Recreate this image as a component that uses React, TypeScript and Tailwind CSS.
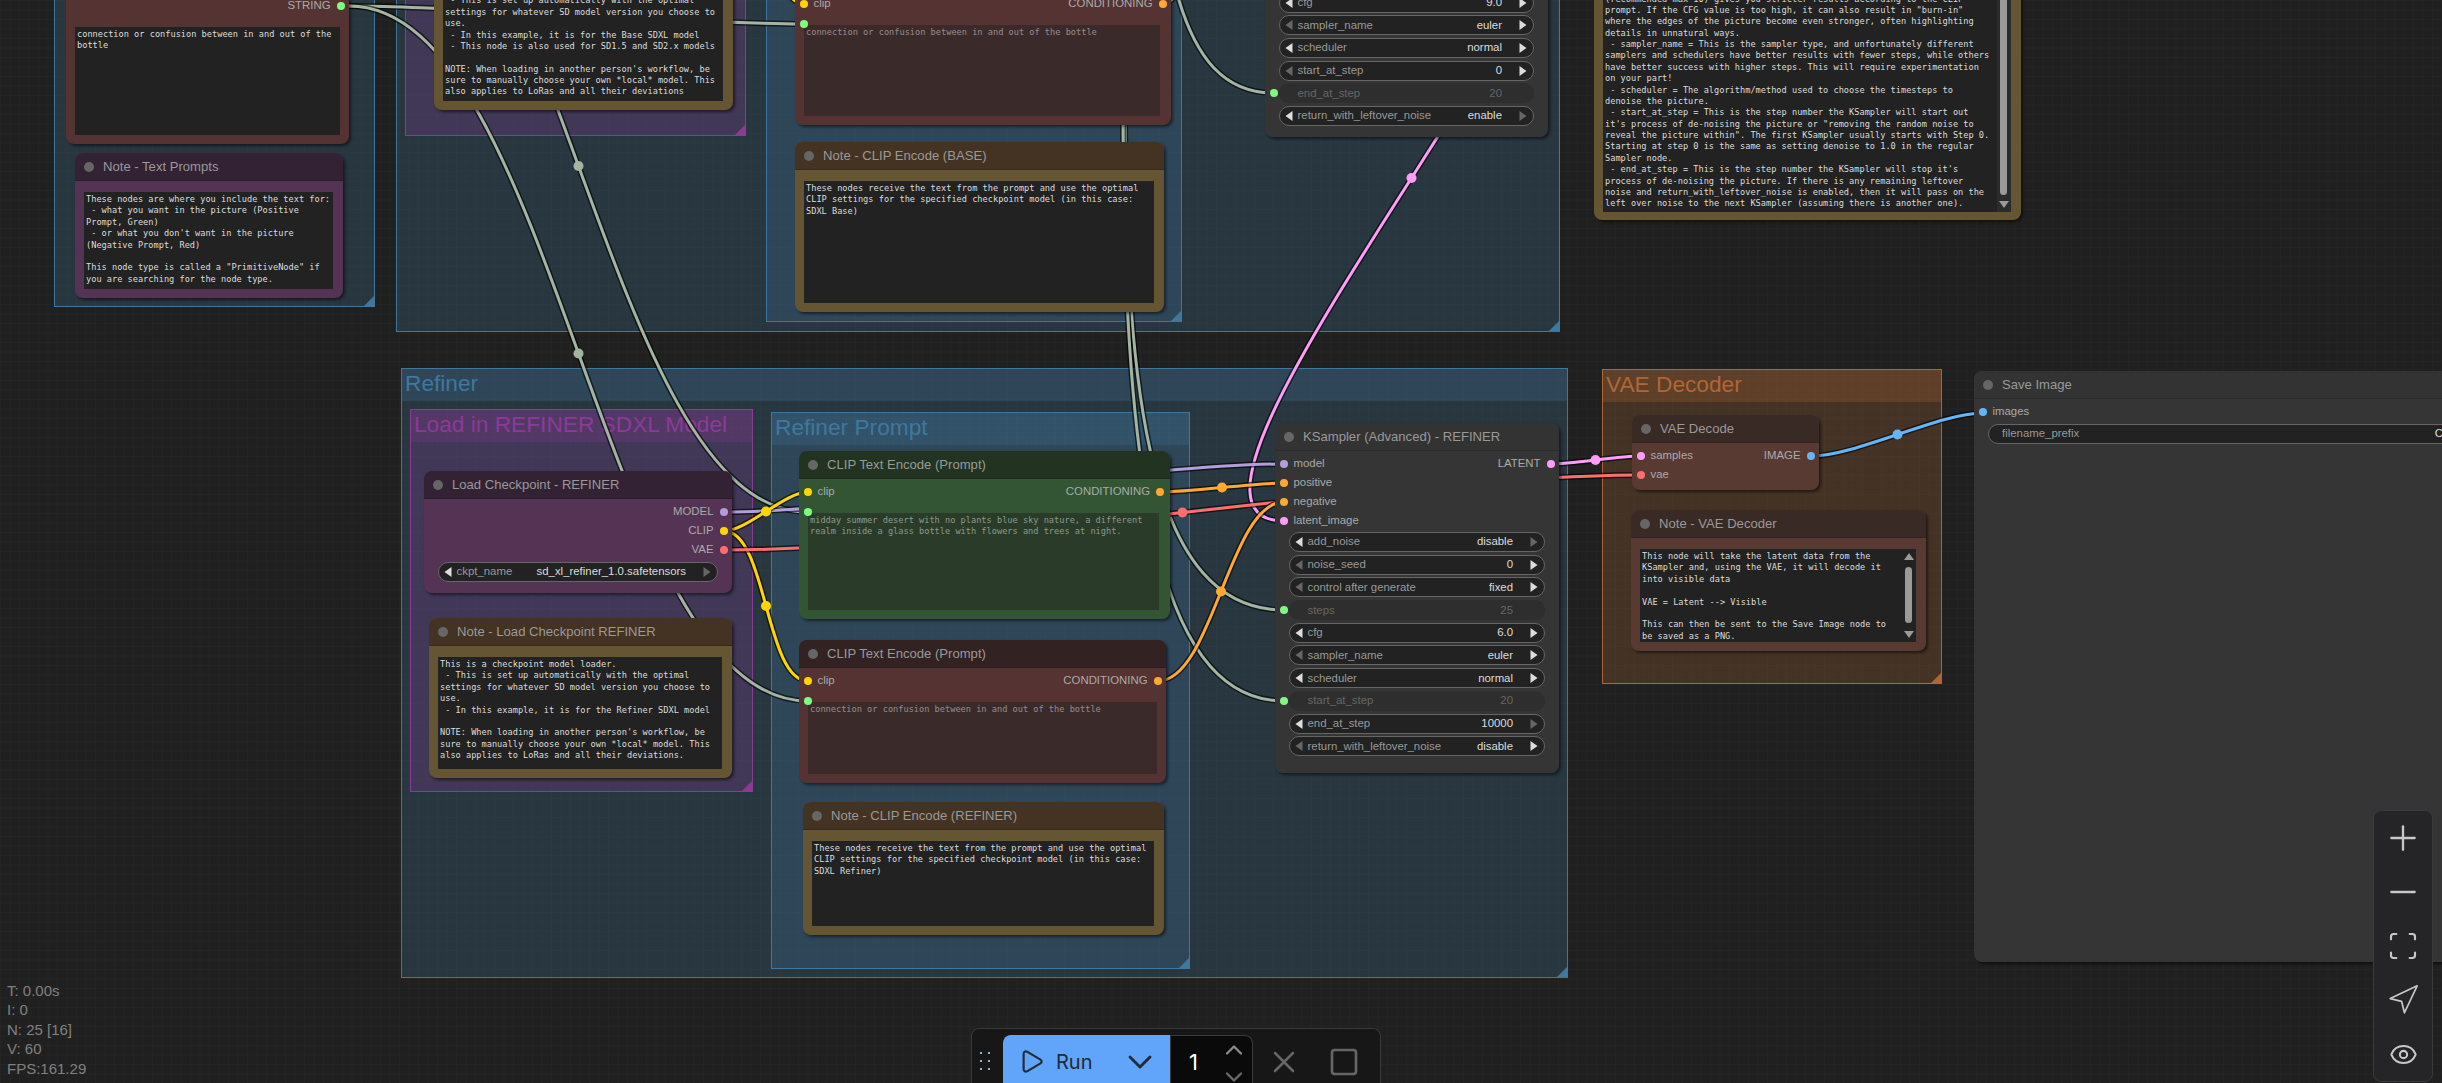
import type { ReactNode } from "react";
import { ChevronDown, ChevronUp, Eye, Minus, Navigation, Play, Plus, Scan, Square, X } from "lucide-react";

type Pt = [number, number];
type Link = { from?: Pt; to?: Pt; d?: string; color: string; mid?: boolean };

const STRING = "#a3b4a3";
const YELLOW = "#ffd500";
const ORANGE = "#ffa931";
const PURPLE = "#b39ddb";
const RED = "#ff6e6e";
const PINK = "#ff9cf9";
const BLUE = "#64b5f6";

const links: Link[] = [
  { from: [349, 6], to: [804, 24], color: STRING },
  { from: [349, 6], to: [808, 701], color: STRING },
  { from: [349, -180], to: [808, 512], color: STRING },
  { d: "M1176 -10 C1195 60 1225 93 1274 93", color: STRING },
  { d: "M1125 100 C1125 400 1150 610 1284 610", color: STRING },
  { d: "M1123 100 C1123 450 1150 701 1284 701", color: STRING },
  { d: "M780 -12 C790 -4 796 4 804 4", color: YELLOW },
  { d: "M1162 4 C1170 3 1175 -2 1180 -10", color: ORANGE },
  { from: [1539, -165], to: [1284, 521], color: PINK },
  { from: [724, 512], to: [1284, 464], color: PURPLE },
  { from: [724, 531], to: [808, 492], color: YELLOW },
  { from: [724, 531], to: [808, 681], color: YELLOW },
  { from: [724, 550], to: [1641, 475], color: RED },
  { from: [1160, 492], to: [1284, 483], color: ORANGE },
  { from: [1158, 681], to: [1284, 502], color: ORANGE },
  { from: [1550, 464], to: [1641, 456], color: PINK },
  { from: [1812, 456], to: [1983, 413], color: BLUE },
];

// litegraph draws its links as a spline with handles a quarter of the distance long
function spline(a: Pt, b: Pt) {
  const k = Math.hypot(b[0] - a[0], b[1] - a[1]) * 0.25;
  return `M${a[0]} ${a[1]} C${a[0] + k} ${a[1]} ${b[0] - k} ${b[1]} ${b[0]} ${b[1]}`;
}

function Wires() {
  return (
    <svg className="absolute left-0 top-0" width={2442} height={1083} fill="none">
      {links.map((l, i) => {
        const d = l.d ?? spline(l.from as Pt, l.to as Pt);
        return (
          <g key={i}>
            <path d={d} stroke="#000" strokeOpacity={0.6} strokeWidth={6} />
            <path d={d} stroke={l.color} strokeWidth={3} />
            {l.from && l.to && (
              <circle cx={(l.from[0] + l.to[0]) / 2} cy={(l.from[1] + l.to[1]) / 2} r={5} fill={l.color} />
            )}
          </g>
        );
      })}
    </svg>
  );
}

const groupTones = {
  blue: { fill: "bg-[#3f789e]/25", edge: "border-[#3f789e]", text: "text-[#3f789e]", corner: "bg-[#3f789e]" },
  purple: { fill: "bg-[#8c3a98]/25", edge: "border-[#8c3a98]", text: "text-[#8c3a98]", corner: "bg-[#8c3a98]" },
  orange: { fill: "bg-[#b06634]/25", edge: "border-[#b06634]", text: "text-[#b06634]", corner: "bg-[#b06634]" },
};

function Group({ className, tone, title }: { className: string; tone: keyof typeof groupTones; title?: string }) {
  const t = groupTones[tone];
  return (
    <div className={`absolute border ${t.fill} ${t.edge} ${className}`}>
      {title && (
        <div className={`flex h-[32px] items-center pb-[4px] pl-[3px] text-[22.7px] ${t.fill} ${t.text}`}>{title}</div>
      )}
      <div className={`absolute bottom-0 right-0 size-[10px] [clip-path:polygon(100%_0,100%_100%,0_100%)] ${t.corner}`} />
    </div>
  );
}

const nodeTones = {
  red: { title: "bg-[#332222]", body: "bg-[#553333]" },
  green: { title: "bg-[#223322]", body: "bg-[#335533]" },
  yellow: { title: "bg-[#443322]", body: "bg-[#665533]" },
  purple: { title: "bg-[#332233]", body: "bg-[#553355]" },
  brown: { title: "bg-[#3a2a26]", body: "bg-[#593a33]" },
  gray: { title: "bg-[#333333]", body: "bg-[#353535]" },
};

function Node({ className, tone, title, end, children }: {
  className: string;
  tone: keyof typeof nodeTones;
  title: string;
  end?: boolean;
  children: ReactNode;
}) {
  const t = nodeTones[tone];
  return (
    <div className={`absolute flex flex-col rounded-lg shadow-[2px_2px_3px_rgba(0,0,0,0.5)] ${t.body} ${className}`}>
      <div className={`flex h-[28px] shrink-0 items-center gap-[9px] rounded-t-lg border-b border-black/15 pl-[9px] text-[13.1px] text-[#999] ${t.title}`}>
        <span className="size-[10px] rounded-full bg-[#666]" />
        {title}
      </div>
      <div className={`flex min-h-0 flex-1 flex-col ${end ? "justify-end" : ""}`}>{children}</div>
    </div>
  );
}

const dotColors = {
  green: "bg-[#7dff7d]",
  yellow: "bg-[#ffd500]",
  orange: "bg-[#ffa931]",
  purple: "bg-[#b39ddb]",
  red: "bg-[#ff6e6e]",
  pink: "bg-[#ff9cf9]",
  blue: "bg-[#64b5f6]",
};
type Dot = keyof typeof dotColors;

function SlotRow({ left, leftDot, right, rightDot }: { left?: string; leftDot?: Dot; right?: string; rightDot?: Dot }) {
  return (
    <div className="flex h-[19px] shrink-0 items-center justify-between pl-[5px] pr-[4.5px] text-[11.4px] text-[#aaa]">
      <div className="flex items-center gap-[5.5px]">
        {leftDot && <span className={`size-[8px] rounded-full ${dotColors[leftDot]}`} />}
        {left}
      </div>
      <div className="flex items-center gap-[6px]">
        {right}
        {rightDot && <span className={`size-[8px] rounded-full ${dotColors[rightDot]}`} />}
      </div>
    </div>
  );
}

function Arrow({ right, dim }: { right?: boolean; dim?: boolean }) {
  return (
    <svg width="8" height="10" viewBox="0 0 8 10" className="shrink-0">
      <polygon points={right ? "0.5,0 7.5,5 0.5,10" : "7.5,0 0.5,5 7.5,10"} fill={dim ? "#666" : "#ddd"} />
    </svg>
  );
}

type W = { label: string; value: string; l?: boolean; r?: boolean; off?: boolean };

function Widget({ label, value, l, r, off }: W) {
  if (off) {
    return (
      <div className="relative flex h-[20px] shrink-0 items-center justify-between rounded-full bg-[#2e2e2e] pl-[18.5px] pr-[32px] text-[11.4px] text-[#666]">
        <span className="absolute -left-[9px] top-[6px] size-[8px] rounded-full bg-[#7dff7d]" />
        <span>{label}</span>
        <span>{value}</span>
      </div>
    );
  }
  return (
    <div className="flex h-[20px] shrink-0 items-center rounded-full border border-[#666] bg-[#222] pl-[5px] pr-[6px] text-[11.4px] text-[#999]">
      <Arrow dim={!l} />
      <span className="ml-[4.5px] flex-1 whitespace-nowrap">{label}</span>
      <span className="mr-[17px] whitespace-nowrap text-[#ddd]">{value}</span>
      <Arrow right dim={!r} />
    </div>
  );
}

function Area({ className, dim, jack, children }: { className: string; dim?: boolean; jack?: boolean; children?: ReactNode }) {
  return (
    <div className={`relative ${className}`}>
      <div className={`relative h-full overflow-hidden whitespace-pre bg-[#222] p-[2px] font-['DejaVu_Sans_Mono',monospace] text-[8.65px] leading-[11.37px] text-[#ddd] ${dim ? "opacity-50" : ""}`}>
        {children}
      </div>
      {jack && <span className="absolute -left-[4px] -top-[5px] size-[8px] rounded-full bg-[#7dff7d]" />}
    </div>
  );
}

function ScrollBar({ thumb }: { thumb: string }) {
  return (
    <div className="absolute bottom-0 right-0 top-0 w-[14px] bg-[#2b2b2b]">
      <div className={`absolute left-[3px] w-[7px] rounded-full bg-[#9a9a9a] ${thumb}`} />
      <svg width="10" height="7" viewBox="0 0 10 7" className="absolute bottom-[4px] left-[2px]">
        <polygon points="0,0 10,0 5,7" fill="#9a9a9a" />
      </svg>
    </div>
  );
}

const noteArea = "mb-[9.5px] ml-[9px] mr-[10px] mt-[11px] min-h-0 flex-1";

const refinerRows: W[] = [
  { label: "add_noise", value: "disable", l: true },
  { label: "noise_seed", value: "0", r: true },
  { label: "control after generate", value: "fixed", r: true },
  { label: "steps", value: "25", off: true },
  { label: "cfg", value: "6.0", l: true, r: true },
  { label: "sampler_name", value: "euler", r: true },
  { label: "scheduler", value: "normal", l: true, r: true },
  { label: "start_at_step", value: "20", off: true },
  { label: "end_at_step", value: "10000", l: true },
  { label: "return_with_leftover_noise", value: "disable", r: true },
];

const baseRows: W[] = [
  { label: "cfg", value: "9.0", l: true, r: true },
  { label: "sampler_name", value: "euler", r: true },
  { label: "scheduler", value: "normal", l: true, r: true },
  { label: "start_at_step", value: "0", r: true },
  { label: "end_at_step", value: "20", off: true },
  { label: "return_with_leftover_noise", value: "enable", l: true },
];

const samplerNote = `(recommended max 10) gives you stricter results according to the CLIP
prompt. If the CFG value is too high, it can also result in "burn-in"
where the edges of the picture become even stronger, often highlighting
details in unnatural ways.
 - sampler_name = This is the sampler type, and unfortunately different
samplers and schedulers have better results with fewer steps, while others
have better success with higher steps. This will require experimentation
on your part!
 - scheduler = The algorithm/method used to choose the timesteps to
denoise the picture.
 - start_at_step = This is the step number the KSampler will start out
it's process of de-noising the picture or "removing the random noise to
reveal the picture within". The first KSampler usually starts with Step 0.
Starting at step 0 is the same as setting denoise to 1.0 in the regular
Sampler node.
 - end_at_step = This is the step number the KSampler will stop it's
process of de-noising the picture. If there is any remaining leftover
noise and return_with_leftover_noise is enabled, then it will pass on the
left over noise to the next KSampler (assuming there is another one).`;

export default function App() {
  return (
    <div className="relative h-[1083px] w-[2442px] overflow-hidden bg-[#202020] bg-[linear-gradient(to_right,#242424_1px,transparent_1px),linear-gradient(to_bottom,#242424_1px,transparent_1px)] bg-[size:9.5px_9.5px] font-['Liberation_Sans',Arial,sans-serif]">
      <Group tone="blue" className="-top-[400px] left-[54px] h-[707px] w-[321px]" />
      <Group tone="blue" className="-top-[400px] left-[396px] h-[732px] w-[1164px]" />
      <Group tone="purple" className="-top-[300px] left-[405px] h-[436px] w-[341px]" />
      <Group tone="blue" className="-top-[300px] left-[766px] h-[622px] w-[416px]" />
      <Group tone="blue" title="Refiner" className="left-[401px] top-[368px] h-[610px] w-[1167px]" />
      <Group tone="purple" title="Load in REFINER SDXL Model" className="left-[410px] top-[409px] h-[383px] w-[343px]" />
      <Group tone="blue" title="Refiner Prompt" className="left-[771px] top-[412px] h-[557px] w-[419px]" />
      <Group tone="orange" title="VAE Decoder" className="left-[1602px] top-[369px] h-[315px] w-[340px]" />

      <Wires />

      <Node tone="red" end title="Primitive" className="-top-[100px] left-[66px] h-[244px] w-[283px]">
        <SlotRow right="STRING" rightDot="green" />
        <Area className="mb-[9px] ml-[9px] mr-[9px] mt-[11.5px] h-[108px]">{"connection or confusion between in and out of the\nbottle"}</Area>
      </Node>
      <Node tone="purple" title="Note - Text Prompts" className="left-[75px] top-[153px] h-[145px] w-[268px]">
        <Area className={noteArea}>{`These nodes are where you include the text for:
 - what you want in the picture (Positive
Prompt, Green)
 - or what you don't want in the picture
(Negative Prompt, Red)

This node type is called a "PrimitiveNode" if
you are searching for the node type.`}</Area>
      </Node>
      <Node tone="yellow" title="Note - Load Checkpoint" className="-top-[57px] left-[434px] h-[167px] w-[299px]">
        <Area className={noteArea}>{`This is a checkpoint model loader.
 - This is set up automatically with the optimal
settings for whatever SD model version you choose to
use.
 - In this example, it is for the Base SDXL model
 - This node is also used for SD1.5 and SD2.x models

NOTE: When loading in another person's workflow, be
sure to manually choose your own *local* model. This
also applies to LoRas and all their deviations`}</Area>
      </Node>
      <Node tone="red" end title="CLIP Text Encode (Prompt)" className="-top-[100px] left-[795px] h-[225px] w-[376px]">
        <SlotRow left="clip" leftDot="yellow" right="CONDITIONING" rightDot="orange" />
        <Area dim jack className="mb-[9px] ml-[9px] mr-[11px] mt-[11.5px] h-[91px]">connection or confusion between in and out of the bottle</Area>
      </Node>
      <Node tone="yellow" title="Note - CLIP Encode (BASE)" className="left-[795px] top-[142px] h-[170px] w-[369px]">
        <Area className={noteArea}>{`These nodes receive the text from the prompt and use the optimal
CLIP settings for the specified checkpoint model (in this case:
SDXL Base)`}</Area>
      </Node>
      <Node tone="gray" end title="KSampler (Advanced) - BASE" className="-top-[100px] left-[1265px] h-[237px] w-[283px]">
        <div className="mx-[14px] mb-[11px] flex flex-col gap-[2.7px]">
          {baseRows.map((w) => <Widget key={w.label} {...w} />)}
        </div>
      </Node>
      <Node tone="yellow" end title="Note - KSampler" className="-top-[100px] left-[1594px] h-[320px] w-[427px]">
        <Area className="mb-[8px] ml-[9px] mr-[10px] mt-[11px] min-h-0 flex-1">
          <div className="absolute bottom-[2.3px] left-[2px]">{samplerNote}</div>
          <ScrollBar thumb="-top-[40px] bottom-[17px]" />
        </Area>
      </Node>

      <Node tone="purple" title="Load Checkpoint - REFINER" className="left-[424px] top-[471px] h-[122px] w-[308px]">
        <div className="pt-[3.5px]">
          <SlotRow right="MODEL" rightDot="purple" />
          <SlotRow right="CLIP" rightDot="yellow" />
          <SlotRow right="VAE" rightDot="red" />
        </div>
        <div className="mx-[14px] mt-[2.5px]">
          <Widget label="ckpt_name" value="sd_xl_refiner_1.0.safetensors" l />
        </div>
      </Node>
      <Node tone="yellow" title="Note - Load Checkpoint REFINER" className="left-[429px] top-[618px] h-[160px] w-[303px]">
        <Area className={noteArea}>{`This is a checkpoint model loader.
 - This is set up automatically with the optimal
settings for whatever SD model version you choose to
use.
 - In this example, it is for the Refiner SDXL model

NOTE: When loading in another person's workflow, be
sure to manually choose your own *local* model. This
also applies to LoRas and all their deviations.`}</Area>
      </Node>
      <Node tone="green" title="CLIP Text Encode (Prompt)" className="left-[799px] top-[451px] h-[168px] w-[371px]">
        <div className="pr-[1.5px] pt-[3.5px]">
          <SlotRow left="clip" leftDot="yellow" right="CONDITIONING" rightDot="orange" />
        </div>
        <Area dim jack className="mb-[9px] ml-[9px] mr-[11px] mt-[11.5px] min-h-0 flex-1">{"midday summer desert with no plants blue sky nature, a different\nrealm inside a glass bottle with flowers and trees at night."}</Area>
      </Node>
      <Node tone="red" title="CLIP Text Encode (Prompt)" className="left-[799px] top-[640px] h-[143px] w-[367px]">
        <div className="pt-[3.5px]">
          <SlotRow left="clip" leftDot="yellow" right="CONDITIONING" rightDot="orange" />
        </div>
        <Area dim jack className="mb-[9px] ml-[9px] mr-[9px] mt-[11.5px] min-h-0 flex-1">connection or confusion between in and out of the bottle</Area>
      </Node>
      <Node tone="yellow" title="Note - CLIP Encode (REFINER)" className="left-[803px] top-[802px] h-[133px] w-[361px]">
        <Area className={noteArea}>{`These nodes receive the text from the prompt and use the optimal
CLIP settings for the specified checkpoint model (in this case:
SDXL Refiner)`}</Area>
      </Node>

      <Node tone="gray" title="KSampler (Advanced) - REFINER" className="left-[1275px] top-[423px] h-[350px] w-[284px]">
        <div className="pt-[3.5px]">
          <SlotRow left="model" leftDot="purple" right="LATENT" rightDot="pink" />
          <SlotRow left="positive" leftDot="orange" />
          <SlotRow left="negative" leftDot="orange" />
          <SlotRow left="latent_image" leftDot="pink" />
        </div>
        <div className="mx-[14px] mt-[1.5px] flex flex-col gap-[2.7px]">
          {refinerRows.map((w) => <Widget key={w.label} {...w} />)}
        </div>
      </Node>

      <Node tone="brown" title="VAE Decode" className="left-[1632px] top-[415px] h-[75px] w-[187px]">
        <div className="pt-[3.5px]">
          <SlotRow left="samples" leftDot="pink" right="IMAGE" rightDot="blue" />
          <SlotRow left="vae" leftDot="red" />
        </div>
      </Node>
      <Node tone="brown" title="Note - VAE Decoder" className="left-[1631px] top-[510px] h-[141px] w-[295px]">
        <Area className="mb-[9px] ml-[9px] mr-[10px] mt-[11px] min-h-0 flex-1">
          {`This node will take the latent data from the
KSampler and, using the VAE, it will decode it
into visible data

VAE = Latent --> Visible

This can then be sent to the Save Image node to
be saved as a PNG.`}
          <div className="absolute bottom-0 right-0 top-0 w-[14px]">
            <svg width="10" height="7" viewBox="0 0 10 7" className="absolute left-[2px] top-[4px]">
              <polygon points="0,7 10,7 5,0" fill="#9a9a9a" />
            </svg>
            <div className="absolute bottom-[19px] left-[3px] top-[18px] w-[7px] rounded-full bg-[#9a9a9a]" />
            <svg width="10" height="7" viewBox="0 0 10 7" className="absolute bottom-[4px] left-[2px]">
              <polygon points="0,0 10,0 5,7" fill="#9a9a9a" />
            </svg>
          </div>
        </Area>
      </Node>

      <Node tone="gray" title="Save Image" className="left-[1974px] top-[371px] h-[591px] w-[540px]">
        <div className="pt-[3.5px]">
          <SlotRow left="images" leftDot="blue" />
        </div>
        <div className="mx-[14px] mt-[2px] flex h-[20px] items-center justify-between rounded-full border border-[#666] bg-[#222] pl-[13px] pr-[20px] text-[11.4px] text-[#999]">
          <span>filename_prefix</span>
          <span className="text-[#ddd]">ComfyUI</span>
        </div>
      </Node>

      <div className="absolute left-[7px] top-[981px] text-[15px] leading-[19.4px] text-[#808080]">
        <div>T: 0.00s</div>
        <div>I: 0</div>
        <div>N: 25 [16]</div>
        <div>V: 60</div>
        <div>FPS:161.29</div>
      </div>

      <div className="absolute left-[971px] top-[1028px] flex h-[70px] w-[410px] items-start rounded-lg border border-[#3a3a3d] bg-[#171718] pl-[8px] pt-[6px]">
        <div className="mt-[17px] grid grid-cols-2 gap-x-[6px] gap-y-[6px]">
          {[0, 1, 2, 3, 4, 5].map((i) => <span key={i} className="size-[2px] bg-[#8fb4d6]" />)}
        </div>
        <div className="ml-[13px] flex h-[56px] w-[167px] items-center rounded-tl-lg bg-[#60a5fa] pb-[3px] pl-[15px] font-['Inter',sans-serif] text-[20px] text-[#232a36]">
          <Play size={27} strokeWidth={1.9} />
          <span className="ml-[11px] flex-1">Run</span>
          <ChevronDown size={40} strokeWidth={1.7} className="mr-[10px]" />
        </div>
        <div className="relative flex h-[56px] w-[83px] items-center rounded-tr-lg border-l border-r border-t border-[#3a3a3d] bg-[#0a0a0a] pb-[3px] pl-[18px] font-['Inter',sans-serif] text-[22px] text-white">
          1
          <ChevronUp size={28} strokeWidth={2} className="absolute right-[4px] top-0 text-[#8a8a8a]" />
          <ChevronDown size={28} strokeWidth={2} className="absolute bottom-0 right-[4px] text-[#6a6a6a]" />
        </div>
        <X size={36} strokeWidth={1.7} className="ml-[13px] mt-[9px] text-[#666]" />
        <Square size={32} strokeWidth={2} className="ml-[26px] mt-[11px] text-[#666]" />
      </div>

      <div className="absolute left-[2373px] top-[810px] flex h-[272px] w-[60px] flex-col items-center rounded-lg border border-[#3a3a3d] bg-[#252527] text-[#c8c8c8]">
        <div className="flex h-[54px] items-center justify-center"><Plus size={40} strokeWidth={1.4} /></div>
        <div className="flex h-[54px] items-center justify-center"><Minus size={40} strokeWidth={1.4} /></div>
        <div className="flex h-[54px] items-center justify-center"><Scan size={32} strokeWidth={1.6} /></div>
        <div className="flex h-[54px] items-center justify-center"><Navigation size={34} strokeWidth={1.2} /></div>
        <div className="flex h-[54px] items-center justify-center"><Eye size={29} strokeWidth={1.7} /></div>
      </div>
    </div>
  );
}
